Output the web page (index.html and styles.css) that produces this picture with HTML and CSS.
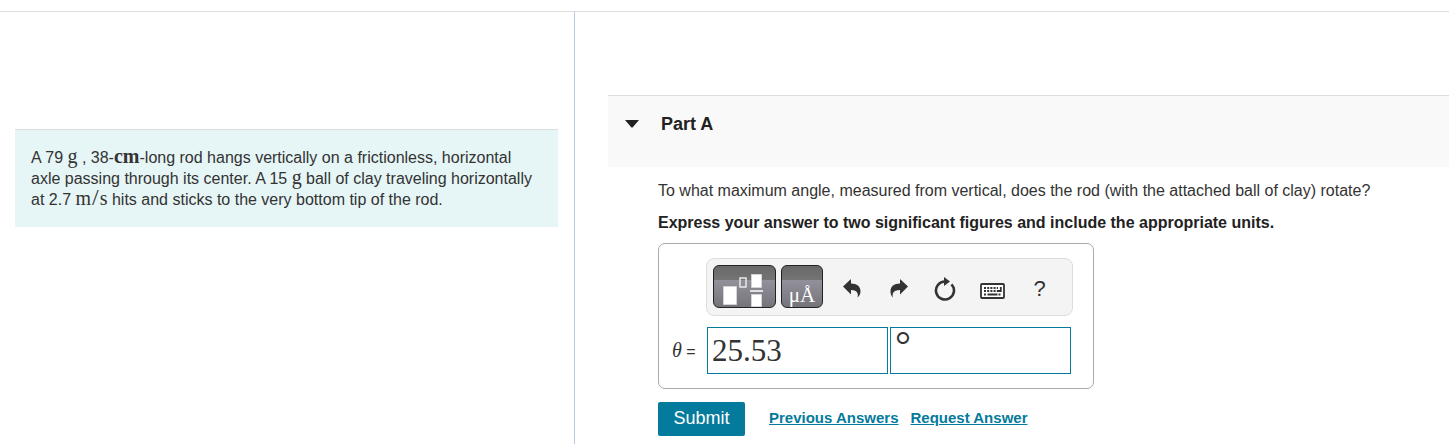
FILE: index.html
```html
<!DOCTYPE html>
<html lang="en">
<head>
    <meta charset="UTF-8">
    <meta name="viewport" content="width=device-width, initial-scale=1.0">
    <title>Part A</title>
    <link rel="stylesheet" href="styles.css">
</head>
<body>
    <div class="page">
        <aside class="intro">
            <p class="problem">A 79 <span class="unit">g</span> , 38-<span class="unit strong">cm</span>-long rod hangs vertically on a frictionless, horizontal axle passing through its center. A 15 <span class="unit">g</span> ball of clay traveling horizontally at 2.7 <span class="unit">m<span class="slash">/</span>s</span> hits and sticks to the very bottom tip of the rod.</p>
        </aside>

        <main class="part">
            <header class="part-header">
                <svg class="caret" width="14" height="8" viewBox="0 0 14 8"><path d="M0 0h14L7.6 7.5H6.4z" fill="#222"/></svg>
                <h2>Part A</h2>
            </header>

            <form class="question" onsubmit="return false">
                <p>To what maximum angle, measured from vertical, does the rod (with the attached ball of clay) rotate?</p>
                <p class="instructions">Express your answer to two significant figures and include the appropriate units.</p>

                <div class="answer-box">
                    <div class="toolbar">
                        <button type="button" class="dark templates" aria-label="Templates">
                            <svg width="61" height="41" viewBox="0 0 61 41">
                                <g fill="#fff" stroke="#d4d4d8">
                                    <path d="M9.5 20.5h13v18h-13zM37.5 8.5h10v13h-10zM37.5 28.5h10v12h-10z"/>
                                    <path d="M26 12h6v9h-6z" fill="none" stroke="#e8e8ec" stroke-width="1.500"/>
                                </g>
                                <path d="M36 25h13" stroke="#fff" stroke-width="1.500"/>
                            </svg>
                        </button>
                        <button type="button" class="dark symbols" aria-label="Symbols">μÅ</button>
                        <button type="button" class="tool undo" aria-label="Undo">
                            <svg width="20" height="22" viewBox="0 0 20 22"><path d="M1 8.500L9 1v4.500c6 0 9.500 3 9.500 7.500 0 3-1 5-3 6.500 1-3 .5-7.500-6.500-7.500v4.500z" fill="#333"/></svg>
                        </button>
                        <button type="button" class="tool" aria-label="Redo">
                            <svg width="20" height="22" viewBox="0 0 20 22"><path d="M19 8.500L11 1v4.500C5 5.500 1.500 8.500 1.500 13c0 3 .5 5 2.500 6.500-1-3-.5-7.500 7-7.500v4.500z" fill="#333"/></svg>
                        </button>
                        <button type="button" class="tool" aria-label="Reset">
                            <svg width="24" height="26" viewBox="0 0 24 26"><path d="M11 5.500a9 9 0 1 0 6.500 2.800" fill="none" stroke="#333" stroke-width="2.600"/><path d="M10 1l6 4.500-6 4.500z" fill="#333"/></svg>
                        </button>
                        <button type="button" class="tool" aria-label="Keyboard">
                            <svg class="keys" width="25" height="16" viewBox="0 0 25 16">
                                <rect x="1" y="1" width="23" height="14" rx="1" fill="#fff" stroke="#333" stroke-width="1.800"/>
                                <path d="M4 5h14M4 8h15M4 11.500h3M18.500 11.500h3" stroke="#333" stroke-width="2" stroke-dasharray="2 1.200"/>
                                <path d="M7.500 11.500h10M18 8h2.800V4" fill="none" stroke="#333" stroke-width="1.800"/>
                            </svg>
                        </button>
                        <button type="button" class="tool help" aria-label="Help">?</button>
                    </div>
                    <div class="entry">
                        <label for="value"><i>θ</i> =</label>
                        <input type="text" id="value" value="25.53">
                        <input type="text" class="units" aria-label="Units" value="°">
                    </div>
                </div>

                <div class="actions">
                    <button type="submit" class="submit">Submit</button>
                    <a href="#previous">Previous Answers</a>
                    <a href="#request">Request Answer</a>
                </div>
            </form>
        </main>
    </div>
</body>
</html>
```
FILE: styles.css
```css
* {
    box-sizing: border-box;
}
body {
    margin: 0;
    padding-top: 11px;
    background: #fff;
    color: #333;
    font-family: "Liberation Sans", Arial, sans-serif;
    font-size: 16px;
}
.page {
    display: flex;
    min-height: calc(100vh - 11px);
    border-top: 1px solid #ddd;
}
.intro {
    width: 575px;
    flex-shrink: 0;
    padding: 117px 16px 0 15px;
    border-right: 1px solid #b5c9dc;
}
.problem {
    margin: 0;
    padding: 17px 16px;
    background: #e6f5f6;
    border-top: 1px solid #ddd;
    line-height: 21px;
}
.unit {
    font-family: "Liberation Serif", "Times New Roman", serif;
    font-size: 20px;
    line-height: 16px;
}
.strong {
    font-weight: bold;
}
.slash {
    padding: 0 1px;
    font-size: 24px;
    line-height: 16px;
}
.part {
    flex: 1;
    padding: 83px 0 0 33px;
}
.part-header {
    display: flex;
    align-items: center;
    gap: 22px;
    height: 72px;
    padding: 0 17px 14px;
    background: #f9f9f9;
    border-top: 1px solid #ddd;
}
.part-header h2 {
    margin: 0;
    color: #222;
    font-size: 18px;
}
.caret {
    margin-bottom: 2px;
}
.question {
    padding: 14px 0 0 50px;
}
.question p {
    margin: 0 0 12px;
    line-height: 20px;
}
.question .instructions {
    margin-bottom: 10px;
    color: #222;
    font-weight: bold;
}
.answer-box {
    width: 436px;
    padding: 14px 20px 14px 13px;
    border: 1px solid #aaa;
    border-radius: 7px;
}
.toolbar {
    display: flex;
    align-items: center;
    height: 58px;
    margin: 0 0 11px 34px;
    padding: 0 6px 2px;
    background: #f4f4f4;
    border: 1px solid #ddd;
    border-radius: 8px;
}
.toolbar button {
    display: flex;
    align-items: center;
    justify-content: center;
    padding: 0;
}
.dark {
    height: 43px;
    border: 1px solid #222;
    border-radius: 6px;
    background: linear-gradient(#686868 0, #747474 34%, #92919b 35%, #74747a 100%);
    color: #fff;
}
.templates {
    width: 63px;
    margin-right: 5px;
}
.toolbar .symbols {
    width: 42px;
    padding-top: 18px;
    font-family: "Liberation Serif", "Times New Roman", serif;
    font-size: 21px;
}
.toolbar .tool {
    width: 47px;
    height: 43px;
    padding-top: 5px;
    border: none;
    background: none;
    color: #333;
}
.undo {
    margin-left: 5px;
}
.keys {
    margin-top: 4px;
}
.help {
    font-size: 22px;
}
.entry {
    display: flex;
    align-items: center;
    gap: 2px;
    margin-right: 2px;
}
.entry label {
    width: 33px;
    font-size: 16px;
    white-space: nowrap;
}
.entry i {
    font-family: "Liberation Serif", "Times New Roman", serif;
    font-size: 20px;
}
.entry input {
    flex: 1;
    min-width: 0;
    height: 47px;
    padding: 0 4px;
    border: 1px solid #047a9c;
    color: #333;
    font-family: "Liberation Serif", "Times New Roman", serif;
    font-size: 31px;
}
.entry .units {
    padding-bottom: 10px;
    font-size: 40px;
}
.actions {
    display: flex;
    align-items: center;
    gap: 12px;
    margin-top: 13px;
}
.submit {
    width: 87px;
    height: 34px;
    margin-right: 12px;
    padding-bottom: 3px;
    border: none;
    border-radius: 2px;
    background: #047a9c;
    color: #fff;
    font-family: inherit;
    font-size: 18px;
}
.actions a {
    padding-bottom: 3px;
    color: #047a9c;
    font-size: 15px;
    font-weight: bold;
}
```
